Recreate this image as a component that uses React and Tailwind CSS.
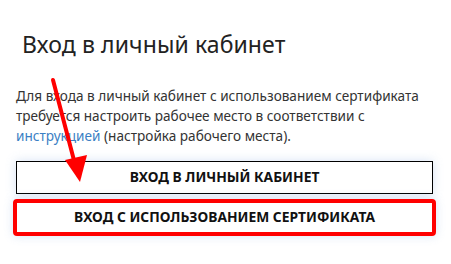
export default function App() {
  return (
    <div
      className="relative w-[451px] h-[264px] bg-white overflow-hidden"
      style={{ fontFamily: '"Noto Sans", "Open Sans", sans-serif' }}
    >
      <div className="px-4 pt-[28px]">
        {/* Title */}
        <h1 className="pl-[6px] text-[23px] leading-[32px] text-[#222] tracking-[0.1px]">
          Вход в личный кабинет
        </h1>

        {/* Description */}
        <p className="mt-[26px] text-[13.6px] leading-[20px] text-[#333] whitespace-nowrap">
          Для входа в личный кабинет с использованием сертификата
          <br />
          требуется настроить рабочее место в соответствии с
          <br />
          <a className="text-[#3b7fc4]">инструкцией</a> (настройка рабочего места).
        </p>

        {/* Buttons */}
        <div className="mt-[15px] flex flex-col gap-[5px]">
          <button className="w-[417px] h-[33px] bg-white border border-black text-[13.8px] font-bold text-[#111] uppercase shadow-[0_0_10px_rgba(120,160,220,0.3)]">
            Вход в личный кабинет
          </button>
          <div className="-mx-[3px] w-[423px] rounded-[4px] border-[4px] border-[#ff0000] shadow-[0_0_10px_rgba(120,160,220,0.3)]">
            <button className="w-full h-[29px] bg-white text-[13.8px] font-bold text-[#111] uppercase">
              Вход с использованием сертификата
            </button>
          </div>
        </div>
      </div>

      {/* Red arrow overlay */}
      <svg
        className="absolute left-0 top-0 pointer-events-none"
        width="451"
        height="264"
        viewBox="0 0 451 264"
      >
        <line x1="53" y1="80" x2="76" y2="168" stroke="#ff0000" strokeWidth="4" strokeLinecap="round" />
        <polygon points="65,160 87,155 80,182" fill="#ff0000" />
      </svg>
    </div>
  );
}
